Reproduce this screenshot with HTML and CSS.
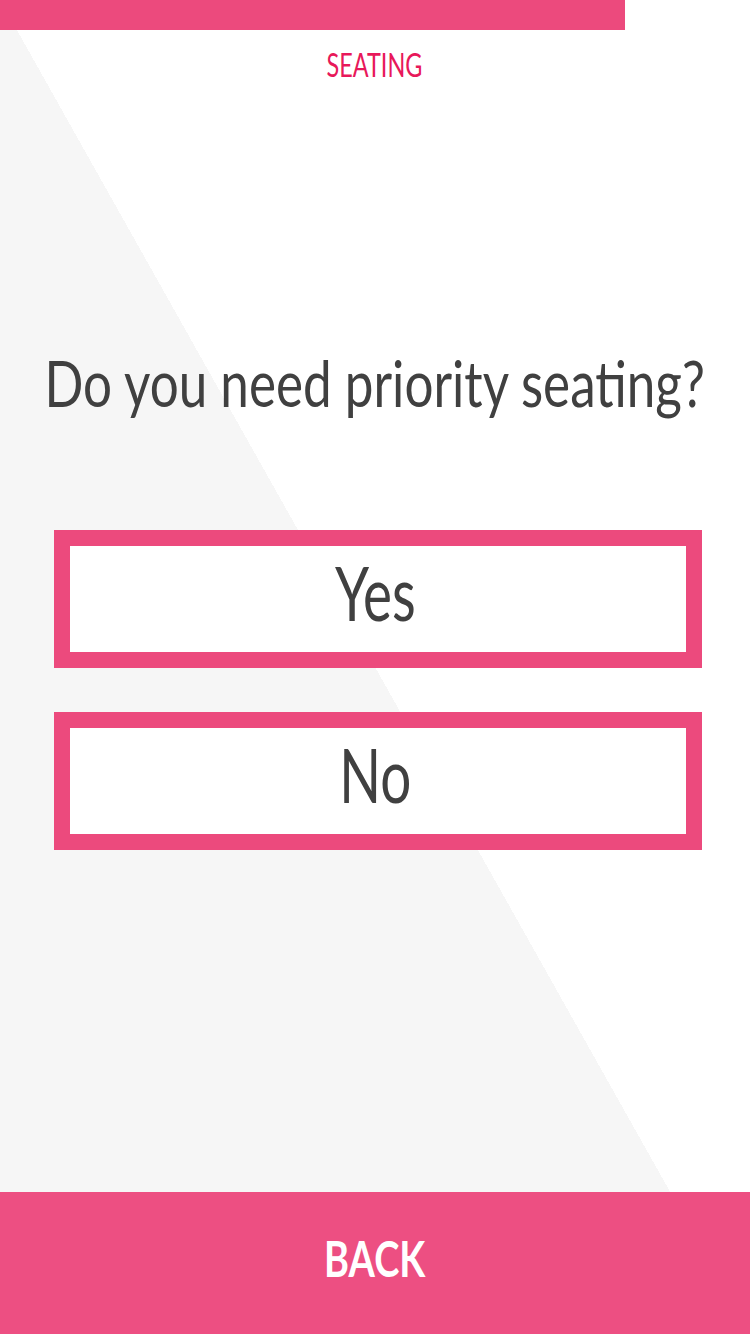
FILE: index.html
```html
<!DOCTYPE html>
<html lang="en">
<head>
<meta charset="utf-8">
<title>Seating</title>
<link rel="stylesheet" href="styles.css">
</head>
<body>
<div class="screen">
  <div class="progress"><div class="progress-fill"></div></div>
  <div class="step-title"><span class="cond">SEATING</span></div>
  <div class="question"><span class="cond">Do you need priority seating?</span></div>
  <div class="options">
    <button class="option"><span class="cond">Yes</span></button>
    <button class="option"><span class="cond">No</span></button>
  </div>
  <button class="back"><span class="cond cond-bold">BACK</span></button>
</div>
</body>
</html>
```
FILE: styles.css
```css
html, body {
  margin: 0;
  padding: 0;
}
body {
  width: 750px;
  height: 1334px;
  overflow: hidden;
  font-family: "Lato", "DejaVu Sans Condensed", sans-serif;
  background: linear-gradient(to top right, #f6f6f6 50%, #ffffff 50%);
}
.screen {
  height: 1334px;
  display: flex;
  flex-direction: column;
}
.cond {
  display: inline-block;
  white-space: nowrap;
  transform: scaleX(0.71);
  transform-origin: 50% 50%;
}
.cond-bold {
  transform: scaleX(0.76);
}
.progress {
  height: 30px;
}
.progress-fill {
  width: 625px;
  height: 30px;
  background: #ec4a7d;
}
.step-title {
  margin-top: 14px;
  text-align: center;
  font-size: 33px;
  line-height: 40px;
  color: #e8185a;
}
.question {
  margin-top: 261px;
  display: flex;
  justify-content: center;
  font-size: 64px;
  line-height: 76px;
  color: #404040;
  white-space: nowrap;
  overflow: visible;
}
.question .cond {
  flex: none;
  transform: scaleX(0.8);
}
.options {
  margin-top: 109px;
  padding: 0 48px 0 54px;
  display: flex;
  flex-direction: column;
  gap: 44px;
}
.option {
  box-sizing: border-box;
  height: 138px;
  border: 16px solid #ec4a7d;
  background: #ffffff;
  font-family: inherit;
  font-size: 75px;
  color: #404040;
  padding: 0 5px 14px 0;
  display: flex;
  align-items: center;
  justify-content: center;
}
.option .cond {
  transform: scaleX(0.73);
}
.back {
  margin-top: auto;
  height: 142px;
  border: 0;
  background: rgba(236, 72, 125, 0.96);
  color: #ffffff;
  font-family: inherit;
  font-weight: bold;
  font-size: 50px;
  padding: 0 0 11px 0;
}
```
